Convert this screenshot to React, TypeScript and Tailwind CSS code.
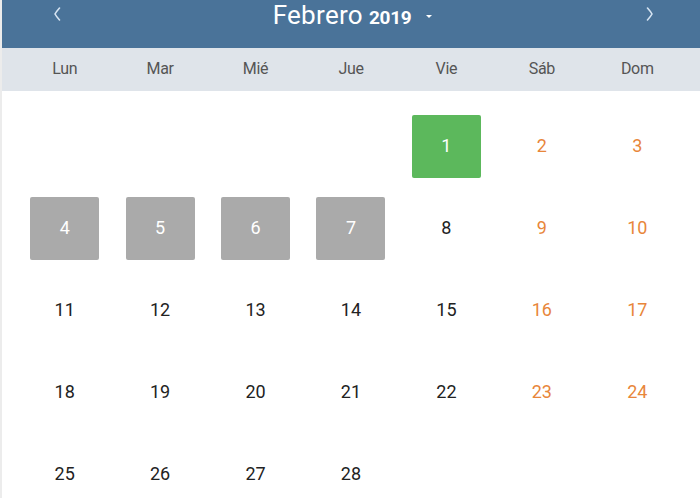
import React from "react";

type Day = { n: number; kind: "normal" | "weekend" | "today" | "disabled" } | null;

const rows: Day[][] = [
  [null, null, null, null, { n: 1, kind: "today" }, { n: 2, kind: "weekend" }, { n: 3, kind: "weekend" }],
  [
    { n: 4, kind: "disabled" },
    { n: 5, kind: "disabled" },
    { n: 6, kind: "disabled" },
    { n: 7, kind: "disabled" },
    { n: 8, kind: "normal" },
    { n: 9, kind: "weekend" },
    { n: 10, kind: "weekend" },
  ],
  [11, 12, 13, 14, 15, 16, 17].map((n, i) => ({ n, kind: i >= 5 ? "weekend" : "normal" }) as Day),
  [18, 19, 20, 21, 22, 23, 24].map((n, i) => ({ n, kind: i >= 5 ? "weekend" : "normal" }) as Day),
  [
    { n: 25, kind: "normal" },
    { n: 26, kind: "normal" },
    { n: 27, kind: "normal" },
    { n: 28, kind: "normal" },
    null,
    null,
    null,
  ],
];

const weekdays = ["Lun", "Mar", "Mié", "Jue", "Vie", "Sáb", "Dom"];

function Cell({ d }: { d: Day }) {
  if (!d) return <div className="h-[82px]" />;
  let cls = "text-[#222222]";
  if (d.kind === "weekend") cls = "text-[#e8863a]";
  if (d.kind === "today") cls = "bg-[#5cb85c] text-white rounded-[2px]";
  if (d.kind === "disabled") cls = "bg-[#aaaaaa] text-white rounded-[2px]";
  return (
    <div className="h-[82px] flex items-center justify-center">
      <div className={`w-[69px] h-[63px] flex items-center justify-center pb-[2px] text-[18px] ${cls}`}>
        {d.n}
      </div>
    </div>
  );
}

function Chevron({ dir }: { dir: "left" | "right" }) {
  return (
    <svg width="8" height="14" viewBox="0 0 8 14" className="mt-[7px]">
      <path
        d={dir === "left" ? "M6.5 1 Q3 5 2 7 Q3 9 6.5 13" : "M1.5 1 Q5 5 6 7 Q5 9 1.5 13"}
        fill="none"
        stroke="#d6e4f2"
        strokeWidth="1.6"
        strokeLinecap="round"
      />
    </svg>
  );
}

export default function App() {
  return (
    <div
      className="w-[700px] h-[498px] overflow-hidden bg-white border-l-[2px] border-[#ececec]"
      style={{ fontFamily: "Roboto, 'Noto Sans', sans-serif" }}
    >
      <div className="h-[48px] bg-[#4a7399] flex items-start justify-between pl-[51px] pr-[46px] text-white">
        <Chevron dir="left" />
        <div className="flex items-start pt-[2px] ml-[-2px]">
          <div className="flex items-baseline">
            <span className="text-[26px] leading-[26px] tracking-[0.3px]">Febrero</span>
            <span className="text-[19px] font-bold leading-none ml-[6px] tracking-[-0.3px]">2019</span>
          </div>
          <span className="ml-[15px] mt-[13px] block w-0 h-0 border-l-[3px] border-r-[3px] border-t-[3px] border-l-transparent border-r-transparent border-t-white" />
        </div>
        <Chevron dir="right" />
      </div>
      <div className="h-[43px] bg-[#dfe4ea] grid grid-cols-7 px-[15px] items-center">
        {weekdays.map((w) => (
          <div key={w} className="text-center text-[16px] text-[#555555] -mt-[2px] tracking-[-0.3px]">
            {w}
          </div>
        ))}
      </div>
      <div className="px-[15px] pt-[14px]">
        {rows.map((r, i) => (
          <div key={i} className="grid grid-cols-7">
            {r.map((d, j) => (
              <Cell key={j} d={d} />
            ))}
          </div>
        ))}
      </div>
    </div>
  );
}
